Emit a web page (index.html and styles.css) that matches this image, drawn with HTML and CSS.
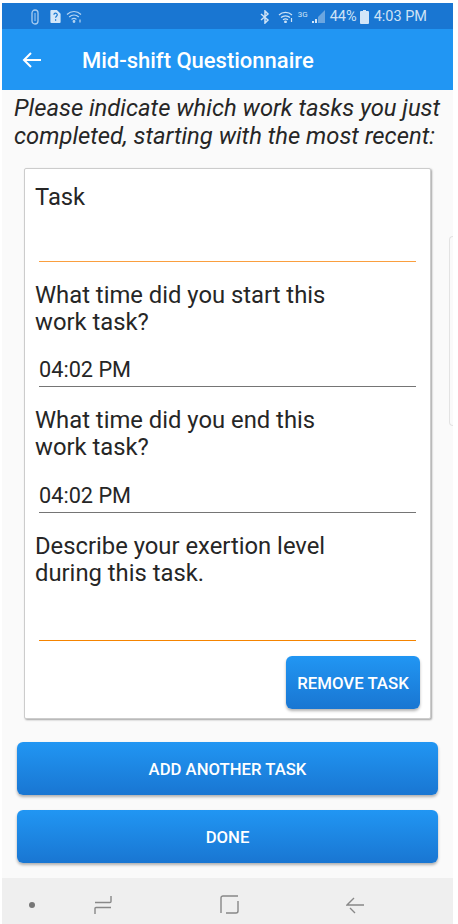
FILE: index.html
```html
<!DOCTYPE html>
<html lang="en">
<head>
<meta charset="utf-8">
<title>Mid-shift Questionnaire</title>
<link rel="stylesheet" href="styles.css">
</head>
<body>
<div class="screen">
  <div class="status">
    <div class="status-left">
      <svg width="10" height="16" viewBox="0 0 10 16" fill="none" stroke="#a9cdf0" stroke-width="1.300"><path d="M2 4a3 3 0 0 1 6 0v8a3 3 0 0 1-6 0z"/><path d="M5 4v8" stroke-width="1"/></svg>
      <svg width="11" height="13" viewBox="0 0 11 14"><path d="M1 0h6l4 4v9a1 1 0 0 1-1 1H1a1 1 0 0 1-1-1V1a1 1 0 0 1 1-1z" fill="#d3e6f8"/><path d="M3.800 5.200c0-2.300 3.600-2.300 3.600 0 0 1.500-1.800 1.500-1.800 3.200M5.600 10v1.500" fill="none" stroke="#1a78d2" stroke-width="1.300"/></svg>
      <svg width="16" height="13" viewBox="0 0 16 13" fill="none" stroke="#b5d5f3" stroke-width="1.200"><path d="M1 4.500c4-4 10-4 14 0M3.200 7c2.800-2.600 6.800-2.600 9.600 0M5.500 9.400c1.500-1.300 3.500-1.300 5 0"/><path d="M14 9.500v3" /><circle cx="8" cy="11.500" r=".8" fill="#b5d5f3"/></svg>
    </div>
    <div class="status-right">
      <svg width="10" height="14" viewBox="0 0 10 14" fill="none" stroke="#cfe3f6" stroke-width="1.500"><path d="M1 4l7 6-3 3V1l3 3-7 6"/></svg>
      <svg class="sr-wifi" width="15" height="12" viewBox="0 0 15 12" fill="none" stroke="#cfe3f6" stroke-width="1.200"><path d="M1 4c3.600-3.500 9.400-3.500 13 0M3 6.500c2.500-2.300 6.500-2.300 9 0M5 8.800c1.500-1.200 3.500-1.200 5 0"/><path d="M13.500 7v4"/><circle cx="7.500" cy="10.800" r=".8" fill="#cfe3f6"/></svg>
      <span class="net">3G</span>
      <svg width="13" height="13" viewBox="0 0 13 13"><path d="M0 13h2v-2H0zM3 13h2V9H3z" fill="#d3e6f8"/><path d="M6 13V7l7-7v13z" fill="#6ba6e0"/></svg>
      <span class="pct">44%</span>
      <svg width="9" height="14" viewBox="0 0 9 14"><path d="M3 0h3v1h2a1 1 0 0 1 1 1v11a1 1 0 0 1-1 1H1a1 1 0 0 1-1-1V2a1 1 0 0 1 1-1h2z" fill="#d3e6f8"/></svg>
      <span class="clock">4:03 PM</span>
    </div>
  </div>
  <header class="appbar">
    <svg class="back" width="20" height="18" viewBox="0 0 20 18" fill="none" stroke="#fff" stroke-width="2"><path d="M19 9H2M9 2L2 9l7 7"/></svg>
    <h1>Mid-shift Questionnaire</h1>
  </header>
  <main class="content">
    <p class="intro">Please indicate which work tasks you just completed, starting with the most recent:</p>
    <section class="card">
      <div class="label task">Task</div>
      <div class="line orange-soft first"></div>
      <div class="label narrow gap">What time did you start this work task?</div>
      <div class="value">04:02 PM</div>
      <div class="line dark"></div>
      <div class="label narrow gap">What time did you end this work task?</div>
      <div class="value value-tall">04:02 PM</div>
      <div class="line dark"></div>
      <div class="label narrow gap">Describe your exertion level during this task.</div>
      <div class="line orange last"></div>
      <div class="card-actions"><button class="btn small">REMOVE TASK</button></div>
    </section>
    <div class="actions">
      <button class="btn wide">ADD ANOTHER TASK</button>
      <button class="btn wide">DONE</button>
    </div>
    <div class="peek"></div>
  </main>
  <nav class="navbar">
    <span class="dot"></span>
    <svg class="nav-recent" width="18" height="20" viewBox="0 0 18 20" fill="none" stroke="#888" stroke-width="1.400"><path d="M17 1v5.500a1 1 0 0 1-1 1H1M1 19v-5.500a1 1 0 0 1 1-1h15"/></svg>
    <svg class="nav-home" width="19" height="19" viewBox="0 0 19 19" fill="none" stroke="#888" stroke-width="1.400"><path d="M1 18V3a2 2 0 0 1 2-2h15M18 6v10a2 2 0 0 1-2 2H6"/></svg>
    <svg class="nav-back" width="18" height="18" viewBox="0 0 18 18" fill="none" stroke="#888" stroke-width="1.400"><path d="M18 9H1l7-7M4 12l5 5"/></svg>
  </nav>
</div>
</body>
</html>
```
FILE: styles.css
```css
* { box-sizing: border-box; }
html, body { margin: 0; padding: 0; background: #fff; }
body { padding: 3px 5px 0 2px; height: 924px; overflow: hidden; font-family: Roboto, "Noto Sans", sans-serif; }
.screen { display: flex; flex-direction: column; height: 921px; background: #fafafa; }
.status { height: 26px; background: #1976d2; display: flex; align-items: center; justify-content: space-between; padding: 1px 26px 0 28px; flex: none; }
.status-left { display: flex; align-items: center; gap: 5px; }
.status-left svg:nth-child(2) { margin-left: 5px; }
.status-right { display: flex; align-items: center; gap: 3px; color: #cfe3f6; font-size: 14.500px; }
.sr-wifi { margin-left: 5px; }
.net { font-size: 8px; line-height: 8px; width: 11px; margin: -3px 0 0 2px; }
.pct { margin-left: 2px; }
.clock { margin-left: 2px; }
.appbar { height: 61px; background: #2196f3; color: #fff; display: flex; align-items: center; padding-left: 20px; flex: none; }
.appbar h1 { margin: 2px 0 0 40px; font-size: 22px; font-weight: 500; }
.content { flex: 1; position: relative; padding: 4px 0 0; }
.intro { margin: 0; padding: 0 4px 0 12px; font-size: 23.800px; line-height: 28px; font-style: italic; color: #262626; }
.card { margin: 18px 22px 0; height: 551px; width: 407px; background: #fff; border: 1px solid #ccc; border-radius: 2px; box-shadow: 1px 1px 2px rgba(0,0,0,.35); padding: 14px 10px 0 10px; display: flex; flex-direction: column; }
.label { font-size: 23.800px; line-height: 27px; color: #262626; }
.task { padding-top: 1px; }
.narrow { width: 310px; }
.gap { margin-top: 20px; }
.value { font-size: 21.700px; line-height: 26px; color: #262626; margin: 21px 0 0 4px; }
.value-tall { margin-top: 22px; }
.line { height: 1px; margin: 3px 0 0 4px; width: 377px; flex: none; }
.dark { background: #757575; }
.orange { background: #f58400; }
.orange-soft { background: #fa9f3f; }
.first { margin-top: 50px; }
.last { margin-top: 53px; }
.card-actions { display: flex; justify-content: flex-end; margin-top: 15px; }
.btn { border: 0; border-radius: 6px; color: #fff; font-family: Roboto, sans-serif; font-weight: 500; background: linear-gradient(#2196f3, #1976d2); box-shadow: 0 2px 3px rgba(0,0,0,.3); }
.small { width: 134px; height: 53px; font-size: 16.800px; padding: 0; }
.actions { display: flex; flex-direction: column; gap: 15px; margin: 23px 15px 0; }
.wide { height: 53px; width: 421px; font-size: 16.700px; padding: 2px 0 0; }
.peek { position: absolute; right: 0; top: 146px; width: 4px; height: 190px; border: 1px solid #e3e3e3; border-right: 0; border-radius: 4px 0 0 4px; }
.navbar { height: 46px; background: #efefef; flex: none; position: relative; display: flex; align-items: center; padding: 7px 0 0 27px; }
.dot { width: 6px; height: 6px; border-radius: 50%; background: #777; }
.nav-recent { margin-left: 59px; }
.nav-home { margin-left: 108px; }
.nav-back { margin-left: 107px; }
```
